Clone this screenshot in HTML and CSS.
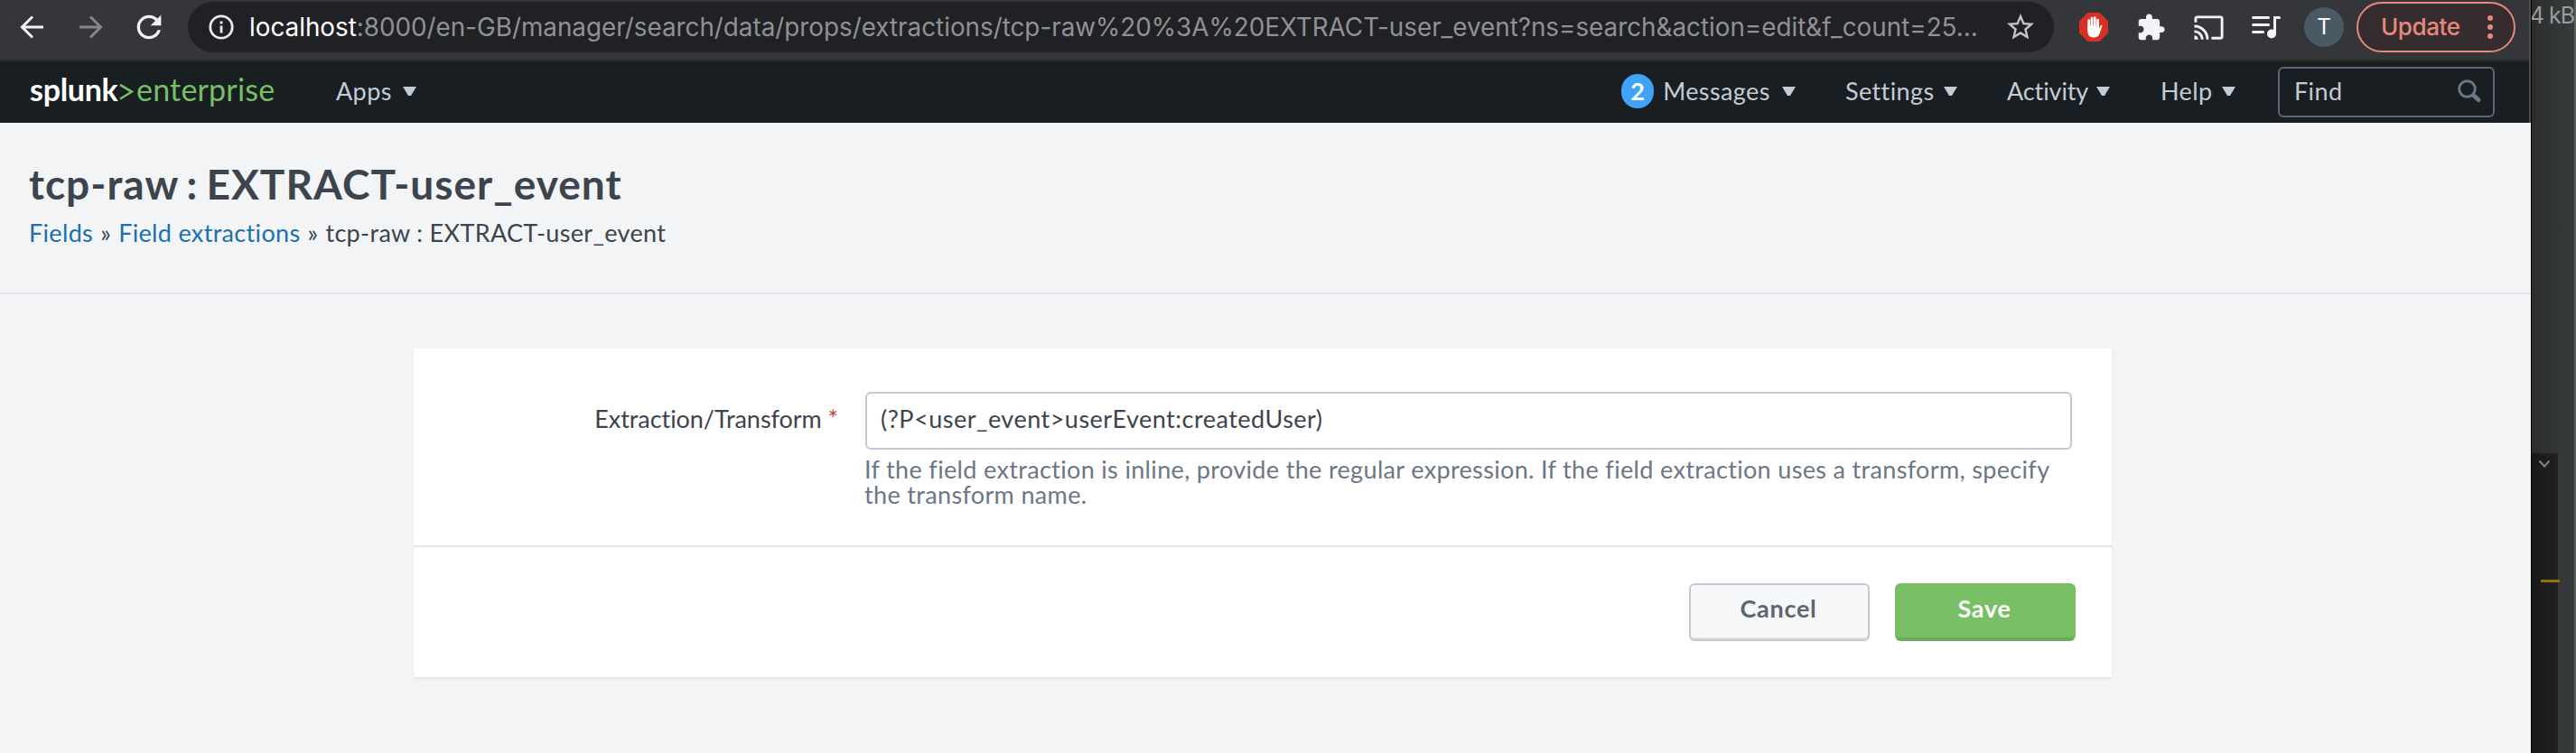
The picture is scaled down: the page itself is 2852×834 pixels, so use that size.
FILE: index.html
```html
<!DOCTYPE html>
<html lang="en-GB">
<head>
<meta charset="utf-8">
<title>tcp-raw : EXTRACT-user_event</title>
<link rel="stylesheet" href="styles.css">
</head>
<body>
<div class="screen">
  <div class="window">
    <div class="chrome">
      <div class="toolbar">
        <svg class="tool back" viewBox="0 0 28 28"><path d="M26 14H3M14 2.5L2.5 14 14 25.500"/></svg>
        <svg class="tool forward" viewBox="0 0 28 28"><path d="M2 14h23M14 2.500L25.500 14 14 25.500"/></svg>
        <svg class="reload" viewBox="0 0 24 24"><path d="M17.650 6.350C16.200 4.900 14.210 4 12 4c-4.420 0-7.990 3.580-7.990 8s3.570 8 7.990 8c3.730 0 6.840-2.550 7.730-6h-2.080c-.82 2.330-3.040 4-5.650 4-3.310 0-6-2.690-6-6s2.690-6 6-6c1.660 0 3.140.69 4.220 1.780L13 11h7V4l-2.350 2.350z"/></svg>
        <div class="omnibox">
          <svg class="info" viewBox="0 0 28 28"><circle cx="14" cy="14" r="12.200"/><path d="M14 12.500v8M14 7.500v3"/></svg>
          <div class="url"><span class="host">localhost</span>:8000/en-GB/manager/search/data/props/extractions/tcp-raw%20%3A%20EXTRACT-user_event?ns=search&amp;action=edit&amp;f_count=25...</div>
          <svg class="star" viewBox="0 0 24 24"><path d="M22 9.240l-7.190-.62L12 2 9.190 8.630 2 9.240l5.460 4.730L5.820 21 12 17.270 18.180 21l-1.630-7.030L22 9.240zM12 15.400l-3.760 2.270 1-4.280-3.320-2.880 4.380-.38L12 6.100l1.710 4.040 4.380.38-3.320 2.880 1 4.280L12 15.400z"/></svg>
        </div>
        <svg class="blocker" viewBox="0 0 32 32"><path class="sign" d="M9.400 0h13.200L32 9.400v13.200L22.600 32H9.400L0 22.600V9.400z"/><path class="fingers" d="M10.700 19V8.500M14 17V6M17.300 17V5.500M20.500 18V8"/><path class="palm" d="M9.300 14.500h12.600v3.500l1.700-3.500c.6-1.200 2.300-.8 1.800.8l-3 8.200c-1.200 3.200-3.300 4-6.200 4-4.500 0-6.900-2.500-6.900-7z"/></svg>
        <svg class="puzzle" viewBox="0 0 24 24"><path d="M20.500 11H19V7c0-1.100-.9-2-2-2h-4V3.500C13 2.120 11.880 1 10.500 1S8 2.120 8 3.500V5H4c-1.100 0-1.990.9-1.990 2v3.800H3.500c1.490 0 2.700 1.210 2.700 2.700s-1.210 2.700-2.700 2.700H2V20c0 1.100.9 2 2 2h3.800v-1.500c0-1.490 1.210-2.700 2.700-2.700 1.490 0 2.700 1.210 2.700 2.700V22H17c1.100 0 2-.9 2-2v-4h1.500c1.380 0 2.500-1.120 2.500-2.500S21.880 11 20.500 11z"/></svg>
        <svg class="cast" viewBox="0 0 24 24"><path d="M21 3H3c-1.100 0-2 .9-2 2v3h2V5h18v14h-7v2h7c1.100 0 2-.9 2-2V5c0-1.100-.9-2-2-2zM1 18v3h3c0-1.660-1.340-3-3-3zm0-4v2c2.760 0 5 2.240 5 5h2c0-3.870-3.130-7-7-7zm0-4v2c4.970 0 9 4.030 9 9h2c0-6.080-4.930-11-11-11z"/></svg>
        <svg class="queue" viewBox="0 0 32 26"><path d="M1.500 2.500h17M1.500 10.500h17M1.500 18.500h11"/><path d="M25.500 20V2.500h5"/><circle cx="22" cy="20.500" r="5"/></svg>
        <div class="avatar">T</div>
        <div class="update"><span>Update</span>
          <svg class="dots" viewBox="0 0 6 28"><circle cx="3" cy="4" r="3"/><circle cx="3" cy="14" r="3"/><circle cx="3" cy="24" r="3"/></svg>
        </div>
      </div>
      <div class="nav">
        <div class="logo"><span class="brand">splunk</span><svg class="prompt" viewBox="0 0 16 21"><path d="M1 3l13 7.500L1 18.500"/></svg><span class="edition">enterprise</span></div>
        <div class="item apps"><span>Apps</span><i class="caret"></i></div>
        <div class="menu">
          <div class="item messages"><b class="badge">2</b><span>Messages</span><i class="caret"></i></div>
          <div class="item settings"><span>Settings</span><i class="caret"></i></div>
          <div class="item activity"><span>Activity</span><i class="caret"></i></div>
          <div class="item help"><span>Help</span><i class="caret"></i></div>
        </div>
        <div class="find"><span>Find</span>
          <svg class="lens" viewBox="0 0 26 26"><circle cx="10.500" cy="10.500" r="8.800"/><path d="M17.500 17.500l5.500 5"/></svg>
        </div>
      </div>
    </div>
    <div class="header">
      <h1 class="title">tcp-raw : EXTRACT-user_event</h1>
      <div class="crumbs"><a class="link">Fields</a><span class="sep">»</span><a class="link">Field extractions</a><span class="sep">»</span><span>tcp-raw : EXTRACT-user_event</span></div>
    </div>
    <div class="card">
      <div class="fields">
        <label class="label">Extraction/Transform <span class="required">*</span></label>
        <div class="control">
          <div class="input">(?P&lt;user_event&gt;userEvent:createdUser)</div>
          <p class="hint">If the field extraction is inline, provide the regular expression. If the field extraction uses a transform, specify<br>the transform name.</p>
        </div>
      </div>
      <div class="actions">
        <div class="button cancel">Cancel</div>
        <div class="button save">Save</div>
      </div>
    </div>
  </div>
  <div class="behind">
    <div class="size">4 kB</div>
    <div class="panel">
      <svg class="chevron" viewBox="0 0 14 10"><path d="M1.500 1.500L7 7.500l5.500-6"/></svg>
      <div class="marker"></div>
    </div>
  </div>
</div>
</body>
</html>
```
FILE: styles.css
```css
* { box-sizing: border-box; }
body { margin: 0; font: 27px Lato, sans-serif; color: #3c444d; }
svg { display: block; flex: none; }
.screen { display: flex; width: 2852px; height: 834px; overflow: hidden; background: #f2f4f6; }
.window { width: 2802px; flex: none; background: #f2f4f6; }
.chrome { border-right: 2px solid #4b4d50; background: #35363a; }

.toolbar { display: flex; align-items: center; height: 68px; padding: 0 14px 6px 22px; border-bottom: 2px solid #2b2a29; background: #35363a; }
.tool { width: 28px; height: 28px; fill: none; stroke: #f1f3f4; stroke-width: 3; }
.forward { margin-left: 36px; stroke: #86878a; }
.reload { width: 40px; height: 40px; margin-left: 31px; fill: #f1f3f4; }
.omnibox { display: flex; align-items: center; width: 2066px; height: 56px; margin-left: 23px; padding: 0 20px 0 23px; border-radius: 28px; background: #202124; }
.info { width: 28px; height: 28px; fill: none; stroke: #e8eaed; stroke-width: 2.8; }
.url { flex: none; width: 1941px; margin-left: 17px; font: 27.8px/36px Inter, sans-serif; color: #909193; white-space: nowrap; }
.host { color: #fff; }
.star { width: 36px; height: 36px; margin-left: 2px; fill: #c3c4c6; }
.blocker { width: 32px; height: 32px; margin-left: 28px; }
.sign { fill: #d93025; }
.fingers { fill: none; stroke: #fff; stroke-width: 2.7; stroke-linecap: round; }
.palm { fill: #fff; }
.puzzle { width: 33px; height: 33px; margin-left: 31px; fill: #f1f3f4; }
.cast { width: 35px; height: 35px; margin-left: 30px; fill: #f1f3f4; }
.queue { width: 32px; height: 26px; margin-left: 30px; fill: none; stroke: #f1f3f4; stroke-width: 3; stroke-linecap: round; }
.queue circle { fill: #f1f3f4; stroke: none; }
.avatar { width: 44px; height: 44px; margin-left: 26px; border-radius: 50%; background: #4a5a64; color: #fff; font: 24px/44px Inter, sans-serif; text-align: center; }
.update { display: flex; align-items: center; justify-content: space-between; width: 176px; height: 56px; margin-left: 14px; padding: 0 23px 0 25px; border: 2px solid #e8887e; border-radius: 28px; background: #352c2e; color: #e8887e; font: 500 26px/36px Inter, sans-serif; letter-spacing: -.4px; }
.dots { width: 6px; height: 28px; fill: #e8887e; }

.nav { display: flex; align-items: center; height: 68px; padding: 0 38px 0 33px; background: #191e22; color: #c3cbd4; letter-spacing: .4px; }
.logo { display: flex; align-items: center; width: 339px; padding-bottom: 6px; font-size: 34px; line-height: 40px; }
.brand { width: 99px; color: #fff; font-weight: 700; letter-spacing: -.3px; }
.prompt { width: 16px; height: 21px; margin-top: 5px; fill: none; stroke: #77be65; stroke-width: 2.6; }
.edition { margin-left: 3px; color: #77be65; letter-spacing: .2px; }
.item { display: flex; align-items: center; justify-content: space-between; padding-bottom: 2px; line-height: 34px; }
.caret { flex: none; width: 15px; height: 10px; background: #c3cbd4; clip-path: polygon(0 0, 100% 0, 60% 100%, 40% 100%); }
.apps { width: 89px; }
.menu { display: flex; gap: 55px; margin-left: auto; margin-right: 47px; }
.messages { width: 193px; }
.messages .caret { margin-left: 3px; }
.settings { width: 124px; }
.activity { width: 114px; letter-spacing: -.1px; }
.help { width: 83px; margin-left: 1px; }
.badge { flex: none; width: 36px; height: 38px; border-radius: 18px; background: #3fa3f8; color: #fff; line-height: 37px; text-align: center; letter-spacing: 0; }
.find { display: flex; align-items: center; justify-content: space-between; width: 240px; height: 56px; padding: 0 13px 3px 16px; border: 2px solid #5c6773; border-radius: 6px; }
.lens { width: 26px; height: 26px; fill: none; stroke: #6b7785; stroke-width: 3; }
.lens path { stroke-width: 5; stroke-linecap: round; }

.header { height: 190px; padding: 40px 32px 0; border-bottom: 2px solid #e1e4e9; }
.title { margin: 0 0 9px; font-size: 46px; font-weight: 700; line-height: 56px; letter-spacing: 1px; word-spacing: -3px; }
.crumbs { display: flex; line-height: 34px; letter-spacing: .33px; white-space: nowrap; }
.link { color: #1e6fad; }
.sep { width: 28px; text-align: center; }

.card { width: 1880px; height: 364px; margin: 60px 0 0 458px; background: #fff; box-shadow: 0 2px 2px #e0e3e8; }
.fields { display: flex; height: 220px; padding-top: 48px; border-bottom: 2px solid #e1e4e9; }
.label { width: 500px; padding: 13px 30px 0 0; line-height: 34px; text-align: right; white-space: nowrap; letter-spacing: -.05px; }
.required { color: #b04540; }
.control { width: 1336px; }
.input { height: 64px; padding: 11px 15px; border: 2px solid #c3c8d2; border-radius: 6px; background: #fff; line-height: 34px; letter-spacing: .5px; }
.hint { margin: 8px 0 0 -1px; color: #6b7785; line-height: 28px; letter-spacing: .34px; white-space: nowrap; }
.actions { display: flex; justify-content: flex-end; gap: 28px; padding: 40px 40px 0 0; }
.button { width: 200px; height: 64px; padding: 9px 2px 0 0; border: 2px solid #c3c8d2; border-radius: 6px; font-weight: 700; line-height: 34px; letter-spacing: .7px; text-align: center; }
.cancel { background: #f7f8fa; color: #5c6773; box-shadow: inset 0 -2px 0 #dddfe2; }
.save { border-color: #77be65 #77be65 #6aab5b; background: #77be65; color: #fff; box-shadow: inset 0 -2px 0 #6aab5b; }

.behind { display: flex; flex-direction: column; width: 50px; border-left: 1px solid #000; border-right: 2px solid #5b5f60; background: linear-gradient(90deg, #2b2d2e, #393c3d); overflow: hidden; }
.size { align-self: flex-end; height: 502px; flex: none; color: #9b9c9d; font: 25px/34px Inter, sans-serif; letter-spacing: -1px; white-space: nowrap; }
.panel { width: 31px; height: 332px; padding-top: 7px; border-right: 2px solid #373737; background: linear-gradient(90deg, #171717, #222); }
.chevron { width: 14px; height: 10px; margin-left: 7px; fill: none; stroke: #858585; stroke-width: 2; }
.marker { width: 21px; height: 3px; margin: 123px 0 0 10px; background: #96700f; }
```
